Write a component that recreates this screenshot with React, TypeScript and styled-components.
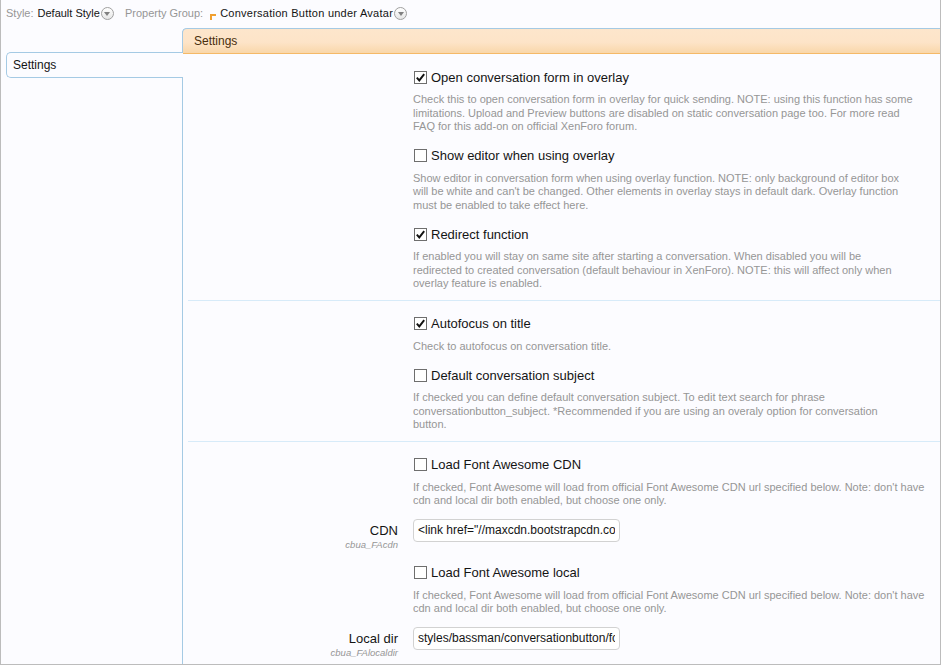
import styled, { createGlobalStyle } from "styled-components";

const GlobalStyle = createGlobalStyle`
  html, body {
    margin: 0;
    padding: 0;
    background: #fcfcff;
  }
  body {
    font-family: "Liberation Sans", Arial, sans-serif;
    color: #141414;
  }
  * {
    box-sizing: border-box;
  }
`;

type Option =
  | { kind: "check"; label: string; checked: boolean; explain: string[] }
  | { kind: "text"; label: string; hint: string; value: string };

const fontAwesomeNote = [
  "If checked, Font Awesome will load from official Font Awesome CDN url specified below. Note: don't have",
  "cdn and local dir both enabled, but choose one only.",
];

const groups: Option[][] = [
  [
    {
      kind: "check",
      label: "Open conversation form in overlay",
      checked: true,
      explain: [
        "Check this to open conversation form in overlay for quick sending. NOTE: using this function has some",
        "limitations. Upload and Preview buttons are disabled on static conversation page too. For more read",
        "FAQ for this add-on on official XenForo forum.",
      ],
    },
    {
      kind: "check",
      label: "Show editor when using overlay",
      checked: false,
      explain: [
        "Show editor in conversation form when using overlay function. NOTE: only background of editor box",
        "will be white and can't be changed. Other elements in overlay stays in default dark. Overlay function",
        "must be enabled to take effect here.",
      ],
    },
    {
      kind: "check",
      label: "Redirect function",
      checked: true,
      explain: [
        "If enabled you will stay on same site after starting a conversation. When disabled you will be",
        "redirected to created conversation (default behaviour in XenForo). NOTE: this will affect only when",
        "overlay feature is enabled.",
      ],
    },
  ],
  [
    {
      kind: "check",
      label: "Autofocus on title",
      checked: true,
      explain: ["Check to autofocus on conversation title."],
    },
    {
      kind: "check",
      label: "Default conversation subject",
      checked: false,
      explain: [
        "If checked you can define default conversation subject. To edit text search for phrase",
        "conversationbutton_subject. *Recommended if you are using an overaly option for conversation",
        "button.",
      ],
    },
  ],
  [
    {
      kind: "check",
      label: "Load Font Awesome CDN",
      checked: false,
      explain: fontAwesomeNote,
    },
    {
      kind: "text",
      label: "CDN",
      hint: "cbua_FAcdn",
      value: '<link href="//maxcdn.bootstrapcdn.com/font-awesome/4.3.0/css/font-awesome.min.css" rel="stylesheet">',
    },
    {
      kind: "check",
      label: "Load Font Awesome local",
      checked: false,
      explain: fontAwesomeNote,
    },
    {
      kind: "text",
      label: "Local dir",
      hint: "cbua_FAlocaldir",
      value: "styles/bassman/conversationbutton/font-awesome",
    },
  ],
];

const Frame = styled.div`
  width: 941px;
  height: 665px;
  border: 1px solid #bcbcbc;
  border-top: none;
  overflow: hidden;
  display: flex;
  flex-direction: column;
`;

const TopBar = styled.div`
  flex-shrink: 0;
  height: 28px;
  padding: 5px 0 0 5px;
  display: flex;
  align-items: flex-start;
  font-size: 11px;
  line-height: 16px;
`;

const Crumb = styled.span`
  display: flex;
  align-items: center;
  margin-right: 11px;
`;

const Muted = styled.span`
  color: #969696;
  margin-right: 4px;
`;

const Value = styled.span<{ $wide?: boolean }>`
  color: #141414;
  letter-spacing: ${(p) => (p.$wide ? "0.25px" : "0")};
`;

const Corner = styled.span`
  display: inline-block;
  width: 6px;
  height: 6px;
  margin: 8px 4px 0 3px;
  border-top: 2px solid #f0a030;
  border-left: 2px solid #f0a030;
`;

const DropCircle = styled.span`
  display: inline-flex;
  align-items: center;
  justify-content: center;
  width: 13px;
  height: 13px;
  margin-left: 1px;
  border-radius: 50%;
  border: 1px solid #a0a0a0;
  background: linear-gradient(#ffffff, #e6e6e6);

  &::after {
    content: "";
    margin-top: 2px;
    border-left: 3.5px solid transparent;
    border-right: 3.5px solid transparent;
    border-top: 4px solid #808080;
  }
`;

const Layout = styled.div`
  flex: 1;
  min-height: 0;
  display: flex;
  align-items: stretch;
`;

const Sidebar = styled.div`
  width: 181px;
  padding: 24px 0 0 5px;
  position: relative;
  z-index: 1;
`;

const Tab = styled.div`
  height: 26px;
  margin-right: -1px;
  padding: 0 6px;
  display: flex;
  align-items: center;
  font-size: 12px;
  color: #141414;
  background: #fcfcff;
  border: 1px solid #a5cae4;
  border-right: none;
  border-radius: 5px 0 0 5px;
`;

const Panel = styled.div`
  flex: 1;
  border-left: 1px solid #a5cae4;
  border-top-left-radius: 5px;
  display: flex;
  flex-direction: column;
`;

const PanelHeading = styled.div`
  flex-shrink: 0;
  height: 26px;
  margin-left: -1px;
  padding: 0 11px;
  display: flex;
  align-items: center;
  font-size: 12px;
  color: #4a2f0c;
  border: 1px solid #a5cae4;
  border-right: none;
  border-bottom: 1px solid #f5b967;
  border-top-left-radius: 5px;
  background: linear-gradient(#fde6cc 0%, #fde4c8 55%, #f9d7aa 100%);
`;

const Group = styled.div<{ $first?: boolean }>`
  flex-shrink: 0;
  margin-left: 5px;
  padding: 14px 0 9px;
  border-top: ${(p) => (p.$first ? "none" : "1px solid #d7ebf9")};
`;

const Unit = styled.div<{ $gap: number }>`
  display: flex;
  margin-top: ${(p) => p.$gap}px;
`;

const UnitLabel = styled.div`
  width: 225px;
  flex-shrink: 0;
  padding: 3px 15px 0 0;
  text-align: right;
`;

const LabelText = styled.div`
  font-size: 13px;
  line-height: 18px;
  color: #141414;
`;

const Hint = styled.div`
  font-size: 9.5px;
  line-height: 10px;
  font-style: italic;
  color: #969696;
`;

const UnitControl = styled.div`
  flex: 1;
  padding-right: 8px;
`;

const CheckLine = styled.label`
  display: flex;
  align-items: center;
  height: 18px;
  font-size: 13px;
  color: #141414;
`;

const Box = styled.span`
  width: 13px;
  height: 13px;
  margin: 0 4px 0 1px;
  border: 1px solid #6e6e6e;
  background: #ffffff;
  display: inline-flex;
  align-items: center;
  justify-content: center;
`;

const Explain = styled.div`
  margin-top: 7px;
  font-size: 11px;
  line-height: 13.5px;
  color: #969696;
`;

const ExplainLine = styled.div`
  white-space: nowrap;
`;

const TextBox = styled.input`
  width: 207px;
  height: 23px;
  padding: 0 4px;
  border: 1px solid #d2d2d2;
  border-radius: 4px;
  background: #ffffff;
  font-family: "Liberation Sans", Arial, sans-serif;
  font-size: 12px;
  color: #141414;
  outline: none;
`;

const Tick = () => (
  <svg width="9" height="9" viewBox="0 0 9 9">
    <path d="M0.8 4.6 L3.3 7.4 L8.2 1.2" fill="none" stroke="#111" strokeWidth="1.9" />
  </svg>
);

const OptionRow = ({ option, gap }: { option: Option; gap: number }) =>
  option.kind === "check" ? (
    <Unit $gap={gap}>
      <UnitLabel />
      <UnitControl>
        <CheckLine>
          <Box>{option.checked && <Tick />}</Box>
          {option.label}
        </CheckLine>
        <Explain>
          {option.explain.map((line, i) => (
            <ExplainLine key={i}>{line}</ExplainLine>
          ))}
        </Explain>
      </UnitControl>
    </Unit>
  ) : (
    <Unit $gap={gap}>
      <UnitLabel>
        <LabelText>{option.label}</LabelText>
        <Hint>{option.hint}</Hint>
      </UnitLabel>
      <UnitControl>
        <TextBox readOnly value={option.value} />
      </UnitControl>
    </Unit>
  );

// spacing above a unit depends on what sits before it
const gapFor = (group: Option[], index: number) => {
  if (index === 0) return 0;
  if (group[index].kind === "text") return 11;
  return group[index - 1].kind === "text" ? 14 : 13;
};

export default function App() {
  return (
    <>
      <GlobalStyle />
      <Frame>
        <TopBar>
          <Crumb>
            <Muted>Style:</Muted>
            <Value>Default Style</Value>
            <DropCircle />
          </Crumb>
          <Crumb>
            <Muted>Property Group:</Muted>
            <Corner />
            <Value $wide>Conversation Button under Avatar</Value>
            <DropCircle />
          </Crumb>
        </TopBar>
        <Layout>
          <Sidebar>
            <Tab>Settings</Tab>
          </Sidebar>
          <Panel>
            <PanelHeading>Settings</PanelHeading>
            {groups.map((group, gi) => (
              <Group key={gi} $first={gi === 0}>
                {group.map((option, oi) => (
                  <OptionRow key={oi} option={option} gap={gapFor(group, oi)} />
                ))}
              </Group>
            ))}
          </Panel>
        </Layout>
      </Frame>
    </>
  );
}
